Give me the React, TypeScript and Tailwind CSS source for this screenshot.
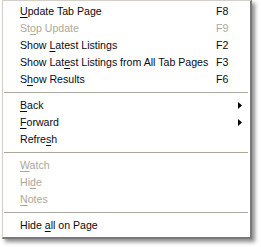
import React from 'react';

type Item =
  | { sep: true }
  | { sep?: false; label: string; key: number; shortcut?: string; disabled?: boolean; submenu?: boolean };

const items: Item[] = [
  { label: 'Update Tab Page', key: 0, shortcut: 'F8' },
  { label: 'Stop Update', key: 2, shortcut: 'F9', disabled: true },
  { label: 'Show Latest Listings', key: 5, shortcut: 'F2' },
  { label: 'Show Latest Listings from All Tab Pages', key: 8, shortcut: 'F3' },
  { label: 'Show Results', key: 1, shortcut: 'F6' },
  { sep: true },
  { label: 'Back', key: 0, submenu: true },
  { label: 'Forward', key: 0, submenu: true },
  { label: 'Refresh', key: 5 },
  { sep: true },
  { label: 'Watch', key: 0, disabled: true },
  { label: 'Hide', key: 2, disabled: true },
  { label: 'Notes', key: 0, disabled: true },
  { sep: true },
  { label: 'Hide all on Page', key: 5 },
];

function Label({ text, at }: { text: string; at: number }) {
  return (
    <span>
      {text.slice(0, at)}
      <span className="underline underline-offset-2">{text[at]}</span>
      {text.slice(at + 1)}
    </span>
  );
}

export default function App() {
  return (
    <div className="w-[261px] h-[247px] bg-white font-['Liberation_Sans',sans-serif] text-[10.6px]">
      <div className="ml-[2px] w-[250px] bg-white border-t border-l border-[#d4d0c8] border-r-2 border-b-2 border-r-[#7a7a7a] border-b-[#7a7a7a] shadow-[3px_3px_4px_rgba(0,0,0,0.45)] pt-[2px] pb-[3px]">
        {items.map((it, i) =>
          it.sep ? (
            <div key={i} className="h-[9px] flex items-center pl-[1px] pr-[2px]">
              <div className="h-px w-full bg-[#aca899]" />
            </div>
          ) : (
            <div
              key={i}
              className={`h-[17px] flex items-center pl-[17px] pr-[6px] ${it.disabled ? 'text-[#aca899]' : 'text-[#0a0a14]'}`}
            >
              <div className="flex-1 whitespace-nowrap">
                <Label text={it.label} at={it.key} />
              </div>
              {it.shortcut && <div className="w-[28px]">{it.shortcut}</div>}
              {it.submenu && (
                <svg width="4" height="7" viewBox="0 0 4 7" className="mr-[2px]">
                  <path d="M0 0 L4 3.5 L0 7 Z" fill="#000" />
                </svg>
              )}
            </div>
          )
        )}
      </div>
    </div>
  );
}
